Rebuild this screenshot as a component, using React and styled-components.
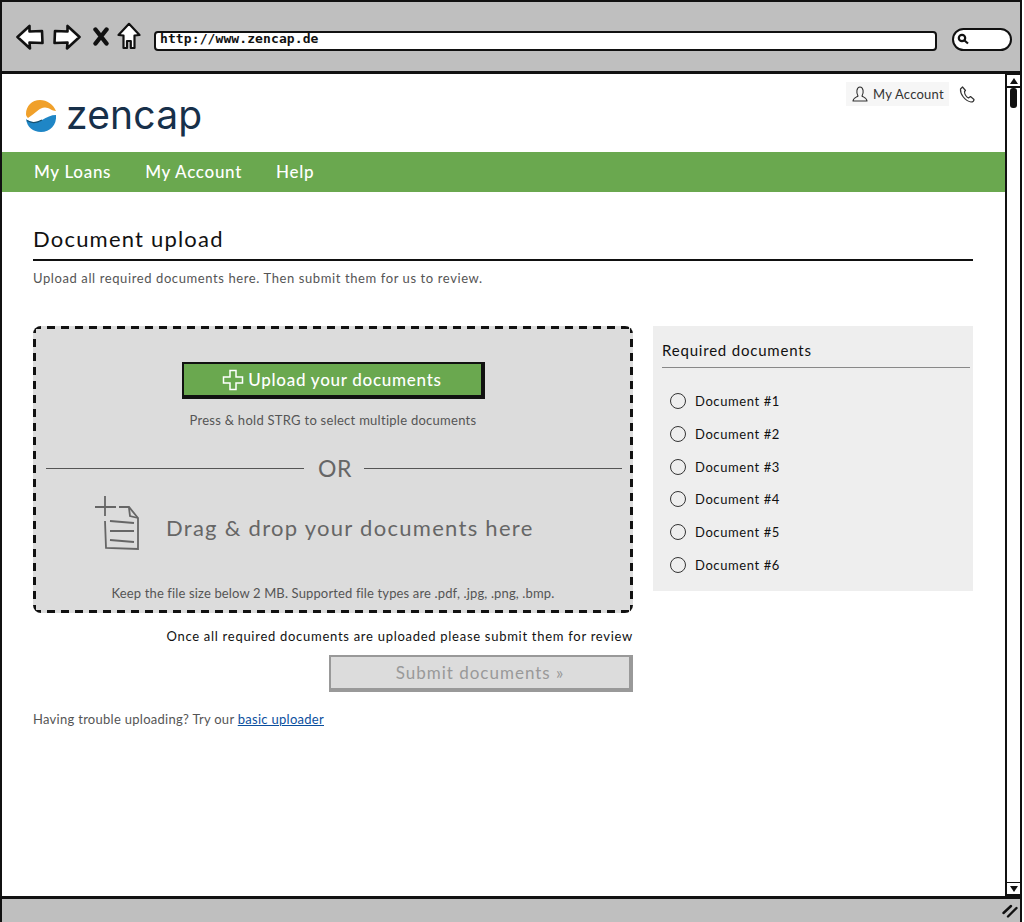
import React from "react";
import styled, { createGlobalStyle } from "styled-components";

const GlobalStyle = createGlobalStyle`
  html, body { margin: 0; padding: 0; background: #fff; }
  body { font-family: "Lato", "Open Sans", sans-serif; }
`;

const docs = ["Document #1", "Document #2", "Document #3", "Document #4", "Document #5", "Document #6"];

function BackIcon({ flip }) {
  return (
    <svg width="28" height="26" viewBox="0 0 28 26" style={flip ? { transform: "scaleX(-1)" } : undefined}>
      <path d="M1.5 13 L13.5 2 L13.5 7.5 L26 7 L26.5 19 L13.5 18.5 L14 24.5 Z" fill="#fff" stroke="#111" strokeWidth="2.6" strokeLinejoin="round" />
    </svg>
  );
}

function HomeIcon() {
  return (
    <svg width="24" height="28" viewBox="0 0 24 28">
      <path d="M1.5 13 L12 1.8 L22.5 13 L17.5 13.5 L17.5 26 L13.8 26 L13.8 19 L10 19 L10 26 L6.5 26 L6.5 13.5 Z" fill="#fff" stroke="#111" strokeWidth="2.2" strokeLinejoin="round" />
    </svg>
  );
}

function StopIcon() {
  return (
    <svg width="16" height="19" viewBox="0 0 16 19">
      <path d="M2.5 2.5 L13.5 16.5 M13.5 2.5 L2.5 16.5" stroke="#111" strokeWidth="4.4" strokeLinecap="round" />
    </svg>
  );
}

function LogoMark() {
  return (
    <svg width="32" height="34" viewBox="0 0 32 34">
      <path d="M1 15 C1 7 7 1 15 1 C22 1 28 5 31 12 C27 12 24 8.5 20 8.5 C14 8.5 11 14 3 19 C1.5 18 1 16 1 15 Z" fill="#f0a02a" />
      <path d="M1 20 C6 24 12 24 17 21 C22 18 26 16 31 16 C32 26 25 33 16 33 C8 33 2 28 1 20 Z" fill="#1f86c6" />
      <path d="M2 21.5 C6 24 12 24 17 21" fill="none" stroke="#14506f" strokeWidth="1.2" />
    </svg>
  );
}

function UserIcon() {
  return (
    <svg width="16" height="16" viewBox="0 0 16 16" fill="none" stroke="#333" strokeWidth="1.1" strokeLinejoin="round">
      <path d="M1 15 L15 15 C15 12 11 11 10 10 C12 7 11.5 1 8 1 C4.5 1 4 7 6 10 C5 11 1 12 1 15 Z" />
    </svg>
  );
}

function PhoneIcon() {
  return (
    <svg width="16" height="17" viewBox="0 0 16 17" fill="none" stroke="#333" strokeWidth="1.2" strokeLinejoin="round">
      <path d="M3.5 1 L1.5 3 C1 8 6 15 12 16 C13.5 16 15 15 15 13.5 L11.5 10.5 L9.5 12 C7.5 11 5.5 8 5.5 5.5 L6.5 4.5 Z" />
    </svg>
  );
}

function PlusIcon() {
  return (
    <svg width="22" height="22" viewBox="0 0 22 22" fill="none" stroke="#fff" strokeWidth="1.5">
      <path d="M8 1.5 L14 1.5 L14 8 L20.5 8 L20.5 14 L14 14 L14 20.5 L8 20.5 L8 14 L1.5 14 L1.5 8 L8 8 Z" />
    </svg>
  );
}

function AddFileIcon() {
  return (
    <svg width="46" height="58" viewBox="0 0 46 58" fill="none" stroke="#666" strokeWidth="1.8">
      <path d="M1 13 L22 13 M11 2 L11 22" />
      <path d="M25 13 L35 13 L44 24 L44 55 L12 54 L11 27" />
      <path d="M35 14 L36 22 L44 24" />
      <path d="M16 27 L40 29 M16 37 L40 37 M16 46 L40 48" />
    </svg>
  );
}

function SearchIcon() {
  return (
    <svg width="12" height="12" viewBox="0 0 12 12" fill="none" stroke="#111" strokeWidth="2.2">
      <circle cx="5" cy="5" r="3.2" />
      <path d="M7.5 7.5 L11 10.5" />
    </svg>
  );
}

function GripIcon() {
  return (
    <svg width="16" height="14" viewBox="0 0 16 14" fill="none" stroke="#111" strokeWidth="2.4" strokeLinecap="round">
      <path d="M1.5 9 L9 2 M6 12.5 L14.5 4" />
    </svg>
  );
}

export default function App() {
  return (
    <>
      <GlobalStyle />
      <Window>
        <TopBar>
          <NavIcons>
            <BackIcon />
            <BackIcon flip />
            <StopIcon />
            <HomeIcon />
          </NavIcons>
          <AddressBar>http://www.zencap.de</AddressBar>
          <SearchBox>
            <SearchIcon />
          </SearchBox>
        </TopBar>
        <Middle>
          <Page>
            <Header>
              <Logo>
                <LogoMark />
                <LogoText>zencap</LogoText>
              </Logo>
              <HeaderLinks>
                <AccountChip>
                  <UserIcon />
                  My Account
                </AccountChip>
                <PhoneIcon />
              </HeaderLinks>
            </Header>
            <Nav>
              <NavLink>My Loans</NavLink>
              <NavLink>My Account</NavLink>
              <NavLink>Help</NavLink>
            </Nav>
            <Main>
              <Title>Document upload</Title>
              <Intro>Upload all required documents here. Then submit them for us to review.</Intro>
              <Columns>
                <LeftColumn>
                  <DropZone>
                    <UploadButton>
                      <PlusIcon />
                      Upload your documents
                    </UploadButton>
                    <Hint>Press &amp; hold STRG to select multiple documents</Hint>
                    <OrRow>
                      <OrLine />
                      <OrText>OR</OrText>
                      <OrLine />
                    </OrRow>
                    <DragRow>
                      <AddFileIcon />
                      <DragText>Drag &amp; drop your documents here</DragText>
                    </DragRow>
                    <FileNote>Keep the file size below 2 MB. Supported file types are .pdf, .jpg, .png, .bmp.</FileNote>
                  </DropZone>
                  <SubmitNote>Once all required documents are uploaded please submit them for review</SubmitNote>
                  <SubmitButton>Submit documents »</SubmitButton>
                  <Trouble>
                    Having trouble uploading? Try our <TroubleLink>basic uploader</TroubleLink>
                  </Trouble>
                </LeftColumn>
                <SidePanel>
                  <SideTitle>Required documents</SideTitle>
                  <DocList>
                    {docs.map((doc) => (
                      <DocItem key={doc}>
                        <Radio />
                        {doc}
                      </DocItem>
                    ))}
                  </DocList>
                </SidePanel>
              </Columns>
            </Main>
          </Page>
          <ScrollBar>
            <ScrollButton>
              <ArrowUp />
            </ScrollButton>
            <ScrollThumb />
            <ScrollSpace />
            <ScrollButton>
              <ArrowDown />
            </ScrollButton>
          </ScrollBar>
        </Middle>
        <StatusBar>
          <GripIcon />
        </StatusBar>
      </Window>
    </>
  );
}

const Window = styled.div`
  width: 1022px;
  height: 922px;
  box-sizing: border-box;
  border: 2px solid #111;
  border-bottom: none;
  display: flex;
  flex-direction: column;
  overflow: hidden;
`;

const TopBar = styled.div`
  height: 69px;
  flex: none;
  background: #bfbfbf;
  border-bottom: 3px solid #111;
  display: flex;
  align-items: center;
  padding: 0 8px 0 14px;
`;

const NavIcons = styled.div`
  display: flex;
  align-items: center;
  gap: 9px;
  width: 138px;
  flex: none;
  svg:nth-child(3) { margin-left: 3px; }
  svg:nth-child(4) { margin: -2px 0 0 -1px; }
`;

const AddressBar = styled.div`
  width: 783px;
  height: 20px;
  margin-top: 8px;
  box-sizing: border-box;
  background: #fff;
  border: 2.5px solid #111;
  border-radius: 4px;
  font: bold 13px/12px "DejaVu Sans Mono", monospace;
  padding-left: 4px;
  color: #111;
  letter-spacing: 0.1px;
`;

const SearchBox = styled.div`
  width: 60px;
  height: 23px;
  margin: 5px 0 0 15px;
  box-sizing: border-box;
  background: #fff;
  border: 2.5px solid #111;
  border-radius: 12px;
  display: flex;
  align-items: center;
  padding-left: 3px;
`;

const Middle = styled.div`
  flex: 1;
  display: flex;
  min-height: 0;
`;

const Page = styled.div`
  flex: 1;
  min-width: 0;
  background: #fff;
`;

const Header = styled.div`
  height: 78px;
  box-sizing: border-box;
  display: flex;
  justify-content: space-between;
  align-items: flex-start;
  padding: 8px 30px 0 23px;
`;

const Logo = styled.div`
  display: flex;
  align-items: center;
  gap: 9px;
  padding-top: 15px;
`;

const LogoText = styled.div`
  font: 400 39px/41px "Inter", sans-serif;
  color: #17304a;
  letter-spacing: 0.2px;
  margin-top: -3px;
`;

const HeaderLinks = styled.div`
  display: flex;
  align-items: center;
  gap: 10px;
`;

const AccountChip = styled.div`
  display: flex;
  align-items: center;
  gap: 5px;
  height: 24px;
  width: 103px;
  box-sizing: border-box;
  padding-left: 6px;
  background: #f6f6f6;
  font-size: 13px;
  letter-spacing: 0.25px;
  color: #333;
`;

const Nav = styled.nav`
  height: 40px;
  box-sizing: border-box;
  padding: 0 0 2px 32px;
  background: #6aa84f;
  display: flex;
  align-items: center;
  gap: 34px;
`;

const NavLink = styled.span`
  color: #fff;
  font-size: 17px;
  font-weight: 500;
  letter-spacing: 0.7px;
`;

const Main = styled.main`
  padding: 34px 32px 0 31px;
`;

const Title = styled.h1`
  margin: 0;
  height: 33px;
  font-size: 22px;
  line-height: 26px;
  font-weight: 400;
  letter-spacing: 1.2px;
  color: #111;
  border-bottom: 2px solid #111;
`;

const Intro = styled.p`
  margin: 9px 0 0;
  font-size: 13px;
  line-height: 16px;
  letter-spacing: 0.6px;
  color: #555;
`;

const Columns = styled.div`
  display: flex;
  gap: 20px;
  margin-top: 40px;
  align-items: flex-start;
`;

const LeftColumn = styled.div`
  width: 600px;
  flex: none;
  display: flex;
  flex-direction: column;
`;

// dashes are backgrounds so their length can follow the sketch, 8 on and 6 off
const DropZone = styled.div`
  height: 287px;
  box-sizing: border-box;
  background-color: #dcdcdc;
  background-image:
    repeating-linear-gradient(90deg, #111 0 8px, transparent 8px 14px),
    repeating-linear-gradient(90deg, #111 0 8px, transparent 8px 14px),
    repeating-linear-gradient(0deg, #111 0 8px, transparent 8px 14px),
    repeating-linear-gradient(0deg, #111 0 8px, transparent 8px 14px);
  background-size: 100% 3px, 100% 3px, 3px 100%, 3px 100%;
  background-position: 0 0, 0 100%, 0 0, 100% 0;
  background-repeat: no-repeat;
  border-radius: 8px;
  display: flex;
  flex-direction: column;
  align-items: center;
  padding: 36px 11px 0;
`;

const UploadButton = styled.div`
  width: 303px;
  height: 37px;
  box-sizing: border-box;
  flex: none;
  background: #6aa84f;
  border: 2px solid #111;
  border-bottom-width: 4px;
  border-right-width: 4px;
  display: flex;
  align-items: center;
  justify-content: center;
  gap: 4px;
  color: #fff;
  font-size: 17px;
  font-weight: 500;
  letter-spacing: 0.72px;
`;

const Hint = styled.div`
  margin-top: 13px;
  font-size: 13px;
  line-height: 16px;
  letter-spacing: 0.27px;
  color: #555;
`;

const OrRow = styled.div`
  align-self: stretch;
  display: flex;
  align-items: center;
  gap: 12px;
  margin-top: 27px;
  padding: 0 0 0 2px;
`;

const OrLine = styled.div`
  flex: 1;
  height: 1px;
  background: #555;
`;

const OrText = styled.div`
  font-size: 23px;
  line-height: 26px;
  letter-spacing: 0.5px;
  padding-left: 2px;
  color: #666;
`;

const DragRow = styled.div`
  align-self: stretch;
  display: flex;
  align-items: center;
  gap: 26px;
  padding-left: 50px;
  margin-top: 13px;
`;

const DragText = styled.div`
  font-size: 22px;
  line-height: 28px;
  letter-spacing: 1.28px;
  color: #666;
  margin-top: 10px;
`;

const FileNote = styled.div`
  margin-top: 33px;
  font-size: 13px;
  line-height: 16px;
  letter-spacing: 0.14px;
  color: #555;
`;

const SubmitNote = styled.div`
  margin-top: 15px;
  text-align: right;
  font-size: 13px;
  line-height: 16px;
  letter-spacing: 0.72px;
  color: #111;
`;

const SubmitButton = styled.div`
  align-self: flex-end;
  width: 304px;
  height: 37px;
  margin-top: 11px;
  box-sizing: border-box;
  background: #dcdcdc;
  border: 2px solid #999;
  border-right-width: 4px;
  border-bottom-width: 4px;
  display: flex;
  align-items: center;
  justify-content: center;
  font-size: 17px;
  letter-spacing: 1px;
  color: #999;
`;

const Trouble = styled.div`
  margin-top: 19px;
  font-size: 13px;
  line-height: 16px;
  letter-spacing: 0.28px;
  color: #555;
`;

const TroubleLink = styled.a`
  color: #0b4f9e;
  text-decoration: underline;
`;

const SidePanel = styled.aside`
  width: 320px;
  height: 265px;
  box-sizing: border-box;
  background: #eee;
  padding: 14px 3px 0 9px;
`;

const SideTitle = styled.div`
  font-size: 15px;
  line-height: 20px;
  letter-spacing: 0.8px;
  color: #111;
  padding-bottom: 7px;
  border-bottom: 1px solid #888;
`;

const DocList = styled.div`
  display: flex;
  flex-direction: column;
  gap: 12.8px;
  margin-top: 23px;
  padding-left: 8px;
`;

const DocItem = styled.div`
  display: flex;
  align-items: center;
  gap: 9px;
  height: 20px;
  font-size: 13px;
  letter-spacing: 0.6px;
  color: #111;
`;

const Radio = styled.span`
  width: 16px;
  height: 16px;
  box-sizing: border-box;
  border: 1.5px solid #333;
  border-radius: 50%;
`;

const ScrollBar = styled.div`
  width: 13px;
  flex: none;
  border-left: 2px solid #111;
  background: #fff;
  display: flex;
  flex-direction: column;
`;

const ScrollButton = styled.div`
  height: 11px;
  flex: none;
  border-bottom: 2px solid #111;
  border-top: 1px solid #111;
  display: flex;
  align-items: center;
  justify-content: center;
`;

const ArrowUp = styled.span`
  border-left: 4px solid transparent;
  border-right: 4px solid transparent;
  border-bottom: 6px solid #111;
`;

const ArrowDown = styled.span`
  border-left: 4px solid transparent;
  border-right: 4px solid transparent;
  border-top: 6px solid #111;
`;

const ScrollThumb = styled.div`
  height: 20px;
  width: 7px;
  margin: 0 auto;
  background: #111;
  border-radius: 3px;
`;

const ScrollSpace = styled.div`
  flex: 1;
`;

const StatusBar = styled.div`
  height: 23px;
  flex: none;
  background: #bfbfbf;
  border-top: 3px solid #111;
  display: flex;
  align-items: center;
  justify-content: flex-end;
  padding-right: 2px;
`;
